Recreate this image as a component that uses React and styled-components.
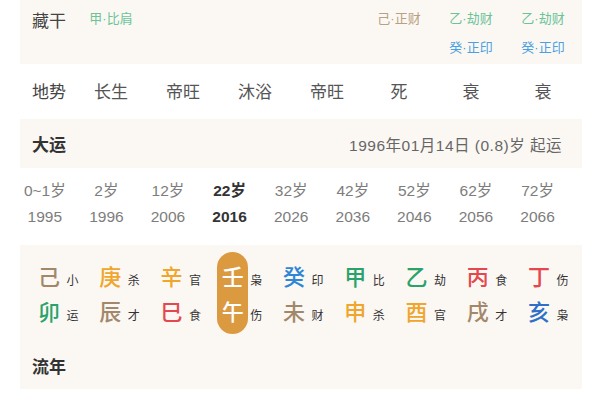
import React from 'react';
import styled, { createGlobalStyle } from 'styled-components';

const GlobalStyle = createGlobalStyle`
  html, body { margin: 0; padding: 0; background: #ffffff; }
  body { font-family: "Liberation Sans", "Noto Sans CJK SC", sans-serif; }
`;

const ELEMENT = {
  earth: '#a3876a',
  metal: '#f0a52c',
  water: '#2f86d6',
  waterDark: '#2f6fc8',
  wood: '#2aa26c',
  fire: '#e4474e',
};

const Page = styled.div`
  width: 600px;
  height: 400px;
  overflow: hidden;
  display: flex;
  flex-direction: column;
`;

const Panel = styled.section`
  background: #fbf8f3;
  margin: 0 18px 0 20px;
  height: ${(p) => p.$h}px;
  box-sizing: border-box;
`;

const PillarGrid = styled.div`
  display: grid;
  grid-template-columns: 43px repeat(7, 72px);
  padding-left: 12px;
  height: 100%;
  box-sizing: border-box;
`;

const HiddenGrid = styled(PillarGrid)`
  padding-top: 10px;
`;

const Label = styled.div`
  font-size: 17px;
  line-height: 20px;
  color: #444;
  white-space: nowrap;
  padding-top: ${(p) => p.$offset || 0}px;
`;

const HiddenCell = styled.div`
  display: flex;
  flex-direction: column;
  align-items: center;
  gap: 11px;
`;

const HiddenItem = styled.span`
  font-size: 13px;
  line-height: 18px;
  color: ${(p) => p.$color};
  white-space: nowrap;
`;

const TerrainRow = styled(PillarGrid)`
  height: 55px;
  align-items: center;
  margin-left: 20px;
  padding-top: 2px;
`;

const TerrainValue = styled.div`
  text-align: center;
  font-size: 17px;
  line-height: 20px;
  color: #555;
`;

const HeaderBar = styled.div`
  display: flex;
  align-items: center;
  justify-content: space-between;
  height: 100%;
  padding: 0 20px 0 12px;
  box-sizing: border-box;
`;

const Title = styled.h3`
  margin: 0;
  font-size: 17px;
  font-weight: 700;
  color: #333;
`;

const StartNote = styled.span`
  font-size: 15.5px;
  color: #666;
  letter-spacing: 0.5px;
`;

const AgesRow = styled.div`
  display: grid;
  grid-template-columns: repeat(9, 61.6px);
  padding: 10px 0 0 14px;
  height: 77px;
  box-sizing: border-box;
`;

const AgeCell = styled.div`
  display: flex;
  flex-direction: column;
  align-items: center;
  font-size: 15.5px;
  line-height: 26px;
  color: ${(p) => (p.$active ? '#333' : '#7d7d7d')};
  font-weight: ${(p) => (p.$active ? 700 : 400)};
  white-space: nowrap;
`;

const CycleGrid = styled.div`
  display: grid;
  grid-template-columns: repeat(9, 61.25px);
  padding-top: 7px;
  height: 89px;
  box-sizing: border-box;
`;

const CycleCell = styled.div`
  display: flex;
  align-items: flex-start;
  gap: 2px;
  padding-left: 13.5px;
`;

const BigCol = styled.div`
  width: 31px;
  display: flex;
  flex-direction: column;
  align-items: center;
  padding: 6px 0;
  border-radius: 16px;
  background: ${(p) => (p.$active ? '#dc9a40' : 'transparent')};
`;

const BigChar = styled.span`
  font-family: "Noto Sans CJK SC", sans-serif;
  font-size: 22px;
  line-height: 35px;
  height: 35px;
  font-weight: 500;
  color: ${(p) => p.$color};
`;

const SmallCol = styled.div`
  display: flex;
  flex-direction: column;
  padding-top: 6px;
`;

const SmallChar = styled.span`
  font-size: 12px;
  height: 35px;
  line-height: 35px;
  padding-top: 6px;
  box-sizing: border-box;
  color: #333;
`;

const FlowHeader = styled.div`
  height: 47px;
  margin-top: 8px;
  display: flex;
  align-items: center;
  padding-left: 12px;
`;

const hidden = [
  [{ t: '甲·比肩', c: '#6cc39a' }],
  [],
  [],
  [],
  [{ t: '己·正财', c: '#b8a083' }],
  [
    { t: '乙·劫财', c: '#6cc39a' },
    { t: '癸·正印', c: '#4c9fe0' },
  ],
  [
    { t: '乙·劫财', c: '#6cc39a' },
    { t: '癸·正印', c: '#4c9fe0' },
  ],
];

const terrain = ['长生', '帝旺', '沐浴', '帝旺', '死', '衰', '衰'];

const ages = [
  ['0~1岁', '1995'],
  ['2岁', '1996'],
  ['12岁', '2006'],
  ['22岁', '2016', true],
  ['32岁', '2026'],
  ['42岁', '2036'],
  ['52岁', '2046'],
  ['62岁', '2056'],
  ['72岁', '2066'],
];

const cycles = [
  { g: '己', gc: ELEMENT.earth, gs: '小', z: '卯', zc: ELEMENT.wood, zs: '运' },
  { g: '庚', gc: ELEMENT.metal, gs: '杀', z: '辰', zc: ELEMENT.earth, zs: '才' },
  { g: '辛', gc: ELEMENT.metal, gs: '官', z: '巳', zc: ELEMENT.fire, zs: '食' },
  { g: '壬', gc: '#fff', gs: '枭', z: '午', zc: '#fff', zs: '伤', active: true },
  { g: '癸', gc: ELEMENT.water, gs: '印', z: '未', zc: ELEMENT.earth, zs: '财' },
  { g: '甲', gc: ELEMENT.wood, gs: '比', z: '申', zc: ELEMENT.metal, zs: '杀' },
  { g: '乙', gc: ELEMENT.wood, gs: '劫', z: '酉', zc: ELEMENT.metal, zs: '官' },
  { g: '丙', gc: ELEMENT.fire, gs: '食', z: '戌', zc: ELEMENT.earth, zs: '才' },
  { g: '丁', gc: ELEMENT.fire, gs: '伤', z: '亥', zc: ELEMENT.waterDark, zs: '枭' },
];

export default function App() {
  return (
    <>
      <GlobalStyle />
      <Page>
        <Panel $h={64}>
          <HiddenGrid>
            <Label $offset={2}>藏干</Label>
            {hidden.map((items, i) => (
              <HiddenCell key={i}>
                {items.map((it, j) => (
                  <HiddenItem key={j} $color={it.c}>
                    {it.t}
                  </HiddenItem>
                ))}
              </HiddenCell>
            ))}
          </HiddenGrid>
        </Panel>

        <TerrainRow>
          <Label>地势</Label>
          {terrain.map((t, i) => (
            <TerrainValue key={i}>{t}</TerrainValue>
          ))}
        </TerrainRow>

        <Panel $h={49}>
          <HeaderBar>
            <Title>大运</Title>
            <StartNote>1996年01月14日 (0.8)岁 起运</StartNote>
          </HeaderBar>
        </Panel>

        <AgesRow>
          {ages.map(([a, y, active], i) => (
            <AgeCell key={i} $active={active}>
              <span>{a}</span>
              <span>{y}</span>
            </AgeCell>
          ))}
        </AgesRow>

        <Panel $h={144}>
          <CycleGrid>
            {cycles.map((c, i) => (
              <CycleCell key={i}>
                <BigCol $active={c.active}>
                  <BigChar $color={c.gc}>{c.g}</BigChar>
                  <BigChar $color={c.zc}>{c.z}</BigChar>
                </BigCol>
                <SmallCol>
                  <SmallChar>{c.gs}</SmallChar>
                  <SmallChar>{c.zs}</SmallChar>
                </SmallCol>
              </CycleCell>
            ))}
          </CycleGrid>
          <FlowHeader>
            <Title>流年</Title>
          </FlowHeader>
        </Panel>
      </Page>
    </>
  );
}
